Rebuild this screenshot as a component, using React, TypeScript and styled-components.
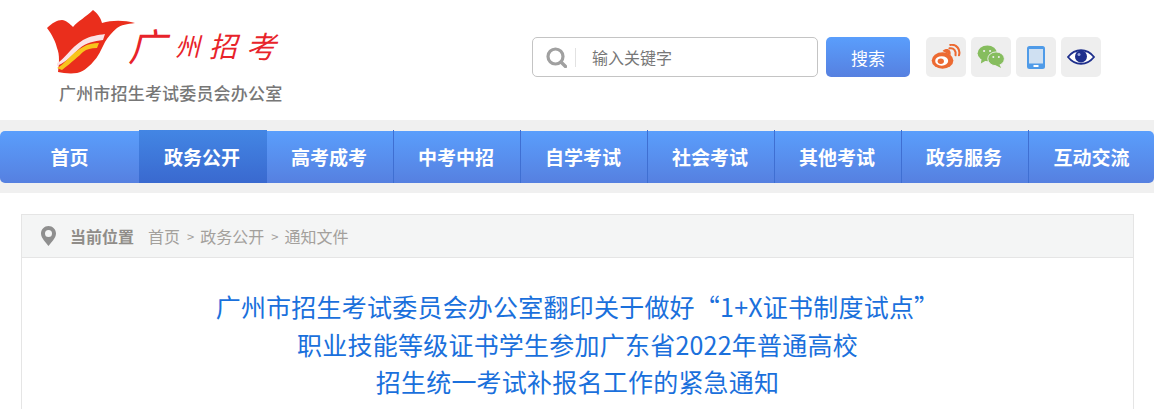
import styled, { createGlobalStyle } from 'styled-components';

const GlobalStyle = createGlobalStyle`
  html, body {
    margin: 0;
    padding: 0;
    background: #fff;
    font-family: "Liberation Sans", "Noto Sans CJK SC", sans-serif;
  }
`;

const Page = styled.div`
  width: 1154px;
  height: 409px;
  overflow: hidden;
`;

const Header = styled.header`
  height: 120px;
  display: flex;
  align-items: flex-start;
`;

const LogoBlock = styled.div`
  width: 532px;
  flex-shrink: 0;
  padding: 10px 0 0 46px;
  box-sizing: border-box;
`;

const LogoRow = styled.div`
  display: flex;
  align-items: flex-start;
  height: 62px;
`;

const BrandName = styled.div`
  display: flex;
  align-items: center;
  gap: 9px;
  height: 50px;
  margin: 10px 0 0 -8px;
  font-family: "Noto Sans CJK SC", sans-serif;
  font-style: italic;
  font-weight: 400;
  color: #e8232a;
  white-space: nowrap;
`;

const BrandChar = styled.span<{ $size: number }>`
  font-size: ${p => p.$size}px;
  line-height: 1;
`;

const OfficeName = styled.div`
  font-family: "Noto Sans CJK SC", sans-serif;
  font-weight: 500;
  font-size: 17px;
  line-height: 22px;
  letter-spacing: 0.18px;
  color: #777;
  margin: 10px 0 0 13px;
  white-space: nowrap;
`;

const SearchBox = styled.div`
  width: 286px;
  height: 40px;
  margin-top: 37px;
  box-sizing: border-box;
  border: 1px solid #c4c4c4;
  border-radius: 5px;
  display: flex;
  align-items: center;
  padding-left: 13px;
  background: #fff;
`;

const SearchDivider = styled.span`
  width: 1px;
  height: 19px;
  background: #e2e2e2;
  margin: 0 16px 0 8px;
`;

const SearchHint = styled.span`
  font-family: "Noto Sans CJK SC", sans-serif;
  font-size: 16px;
  color: #777;
`;

const SearchButton = styled.button`
  width: 84px;
  height: 40px;
  margin: 37px 0 0 8px;
  padding: 0;
  border: none;
  border-radius: 5px;
  background: linear-gradient(#5a9efc, #5680e0);
  color: #fff;
  font-family: "Noto Sans CJK SC", sans-serif;
  font-size: 17px;
`;

const IconRow = styled.div`
  display: flex;
  gap: 5px;
  margin: 37px 0 0 16px;
`;

const IconTile = styled.div`
  width: 40px;
  height: 40px;
  border-radius: 5px;
  background: #eeeeee;
  display: flex;
  align-items: center;
  justify-content: center;
`;

const NavBand = styled.div`
  height: 73px;
  background: #f0f0f0;
  padding-top: 11px;
  box-sizing: border-box;
`;

const NavBar = styled.nav`
  height: 52px;
  border-radius: 5px;
  background: linear-gradient(#5a9efc, #5680e0);
  display: flex;
`;

const NavItem = styled.a<{ $active?: boolean; $width: number; $divider?: boolean }>`
  width: ${p => p.$width}px;
  flex-shrink: 0;
  box-sizing: border-box;
  height: 53px;
  margin-top: -1px;
  padding-right: 2px;
  display: flex;
  align-items: center;
  justify-content: center;
  color: #fff;
  font-family: "Noto Sans CJK SC", sans-serif;
  font-weight: 700;
  font-size: 19px;
  background: ${p => (p.$active ? 'linear-gradient(#4386e4, #3a69cf)' : 'transparent')};
  border-left: ${p => (p.$divider ? '1px solid #3f6fd2' : 'none')};

  &:first-child,
  &:last-child {
    padding-right: 0;
  }
`;

const Content = styled.main`
  margin: 21px 20px 0 21px;
  border: 1px solid #e5e5e5;
  border-bottom: none;
  height: 300px;
`;

const Crumbs = styled.div`
  height: 42px;
  background: #f4f5f5;
  border-bottom: 1px solid #e5e5e5;
  display: flex;
  align-items: center;
  padding-left: 19px;
  font-family: "Noto Sans CJK SC", sans-serif;
  font-size: 16px;
  color: #a3a09c;
`;

const CrumbLabel = styled.strong`
  color: #908d89;
  font-weight: 700;
  margin: 0 14px 0 14px;
`;

const CrumbSep = styled.span`
  margin: 0 6px 0 7px;
  font-size: 13px;
`;

const Title = styled.h1`
  margin: 30px 0 0;
  font-family: "Noto Sans CJK SC", sans-serif;
  font-weight: 400;
  font-size: 25px;
  line-height: 37.5px;
  letter-spacing: 0.22px;
  text-align: center;
  color: #1a70dc;
`;

const TulipLogo = () => (
  <svg width="90" height="64" viewBox="0 0 90 64">
    <path
      d="M1 18 C6 13 11 10 16 10 C20 10 24 14 27 17 C32 11 40 7 47 0 C51 3 55 8 56 13 C66 10 78 10 89 13 C81 14 75 15 71 18 C66 22 62 27 59 32 C55 40 52 47 47 52 C42 58 36 62 31 63 C24 64 17 63 12 62 C13 54 14 45 11 38 C10 33 6 24 1 18 Z"
      fill="#ea2e1c"
    />
    <path d="M11 53 C18 50 24 38 37 30 C44 26 52 25 59 24 L57 30 C48 31 40 33 34 38 C28 43 24 50 11 56 Z" fill="#fbe3e6" />
    <path d="M11 58 C18 55 24 44 37 37 C42 34 47 33 53 33 L51 38 C45 38 41 39 37 42 C33 46 26 52 16 60 Z" fill="#f7c51c" />
  </svg>
);

const WeiboIcon = () => (
  <svg width="30" height="26" viewBox="0 0 34 30">
    <ellipse cx="13" cy="19" rx="12.5" ry="9.5" fill="#ec6a32" />
    <path d="M13 8 C18 3 24 7 22 13 Z" fill="#ec6a32" />
    <ellipse cx="12" cy="19.5" rx="7.5" ry="5.5" fill="#fff" />
    <ellipse cx="11" cy="20" rx="3.6" ry="3.2" fill="#ec6a32" />
    <path d="M21 5 C26 4 29 8 28 13" fill="none" stroke="#ec6a32" strokeWidth="2.4" strokeLinecap="round" />
    <path d="M22 1 C29 0 34 6 32 13" fill="none" stroke="#ec6a32" strokeWidth="2.4" strokeLinecap="round" />
  </svg>
);

const WechatIcon = () => (
  <svg width="28" height="24" viewBox="0 0 30 26">
    <ellipse cx="11" cy="9" rx="10.5" ry="8.5" fill="#86bd5e" />
    <path d="M5 14 L4 20 L11 16 Z" fill="#86bd5e" />
    <ellipse cx="20.5" cy="15" rx="9" ry="7.5" fill="#86bd5e" stroke="#eeeeee" strokeWidth="1" />
    <path d="M24 21 L26 25 L20 22 Z" fill="#86bd5e" />
    <circle cx="7.5" cy="6.5" r="1.2" fill="#eeeeee" />
    <circle cx="14" cy="6.5" r="1.2" fill="#eeeeee" />
    <circle cx="17.5" cy="13" r="1.1" fill="#eeeeee" />
    <circle cx="23.5" cy="13" r="1.1" fill="#eeeeee" />
  </svg>
);

const PhoneIcon = () => (
  <svg width="18" height="23" viewBox="0 0 18 23">
    <rect width="18" height="23" rx="2.5" fill="#4f9be8" />
    <rect x="2" y="3" width="14" height="14.5" fill="#cfe0f2" />
    <rect x="6.5" y="19" width="5" height="2" fill="#fff" />
  </svg>
);

const EyeIcon = () => (
  <svg width="28" height="18" viewBox="0 0 28 18">
    <path d="M1 9 C8 0 20 0 27 9 C20 18 8 18 1 9 Z" fill="#fff" stroke="#1e2f8c" strokeWidth="1.8" />
    <circle cx="14" cy="8.5" r="6" fill="#1e2f8c" />
    <circle cx="12" cy="6.5" r="1.5" fill="#9aa6dc" />
  </svg>
);

const SearchGlyph = () => (
  <svg width="21" height="21" viewBox="0 0 21 21">
    <circle cx="9.5" cy="9.5" r="7.5" fill="none" stroke="#a0a0a0" strokeWidth="3.2" />
    <path d="M15 15 L19.5 19.5" stroke="#a0a0a0" strokeWidth="3.4" strokeLinecap="round" />
  </svg>
);

const PinGlyph = () => (
  <svg width="15" height="20" viewBox="0 0 15 20">
    <path
      fillRule="evenodd"
      d="M7.5 0 C3.4 0 0 3.3 0 7.4 C0 12 5 16.5 7.5 20 C10 16.5 15 12 15 7.4 C15 3.3 11.6 0 7.5 0 Z M7.5 4 A3.5 3.5 0 1 1 7.5 11 A3.5 3.5 0 1 1 7.5 4 Z"
      fill="#8f8f8f"
    />
  </svg>
);

const brandChars = [
  { char: '广', size: 38 },
  { char: '州', size: 25 },
  { char: '招', size: 28 },
  { char: '考', size: 30 },
];

const navItems = [
  { label: '首页', width: 139 },
  { label: '政务公开', width: 128, active: true },
  { label: '高考成考', width: 126 },
  { label: '中考中招', width: 127, divider: true },
  { label: '自学考试', width: 127, divider: true },
  { label: '社会考试', width: 127, divider: true },
  { label: '其他考试', width: 127, divider: true },
  { label: '政务服务', width: 127, divider: true },
  { label: '互动交流', width: 126, divider: true },
];

const App = () => (
  <Page>
    <GlobalStyle />
    <Header>
      <LogoBlock>
        <LogoRow>
          <TulipLogo />
          <BrandName>
            {brandChars.map(item => (
              <BrandChar key={item.char} $size={item.size}>{item.char}</BrandChar>
            ))}
          </BrandName>
        </LogoRow>
        <OfficeName>广州市招生考试委员会办公室</OfficeName>
      </LogoBlock>
      <SearchBox>
        <SearchGlyph />
        <SearchDivider />
        <SearchHint>输入关键字</SearchHint>
      </SearchBox>
      <SearchButton>搜索</SearchButton>
      <IconRow>
        <IconTile><WeiboIcon /></IconTile>
        <IconTile><WechatIcon /></IconTile>
        <IconTile><PhoneIcon /></IconTile>
        <IconTile><EyeIcon /></IconTile>
      </IconRow>
    </Header>
    <NavBand>
      <NavBar>
        {navItems.map(item => (
          <NavItem key={item.label} $width={item.width} $active={item.active} $divider={item.divider}>
            {item.label}
          </NavItem>
        ))}
      </NavBar>
    </NavBand>
    <Content>
      <Crumbs>
        <PinGlyph />
        <CrumbLabel>当前位置</CrumbLabel>
        首页<CrumbSep>&gt;</CrumbSep>政务公开<CrumbSep>&gt;</CrumbSep>通知文件
      </Crumbs>
      <Title>
        广州市招生考试委员会办公室翻印关于做好“1+X证书制度试点”
        <br />
        职业技能等级证书学生参加广东省2022年普通高校
        <br />
        招生统一考试补报名工作的紧急通知
      </Title>
    </Content>
  </Page>
);

export default App;
